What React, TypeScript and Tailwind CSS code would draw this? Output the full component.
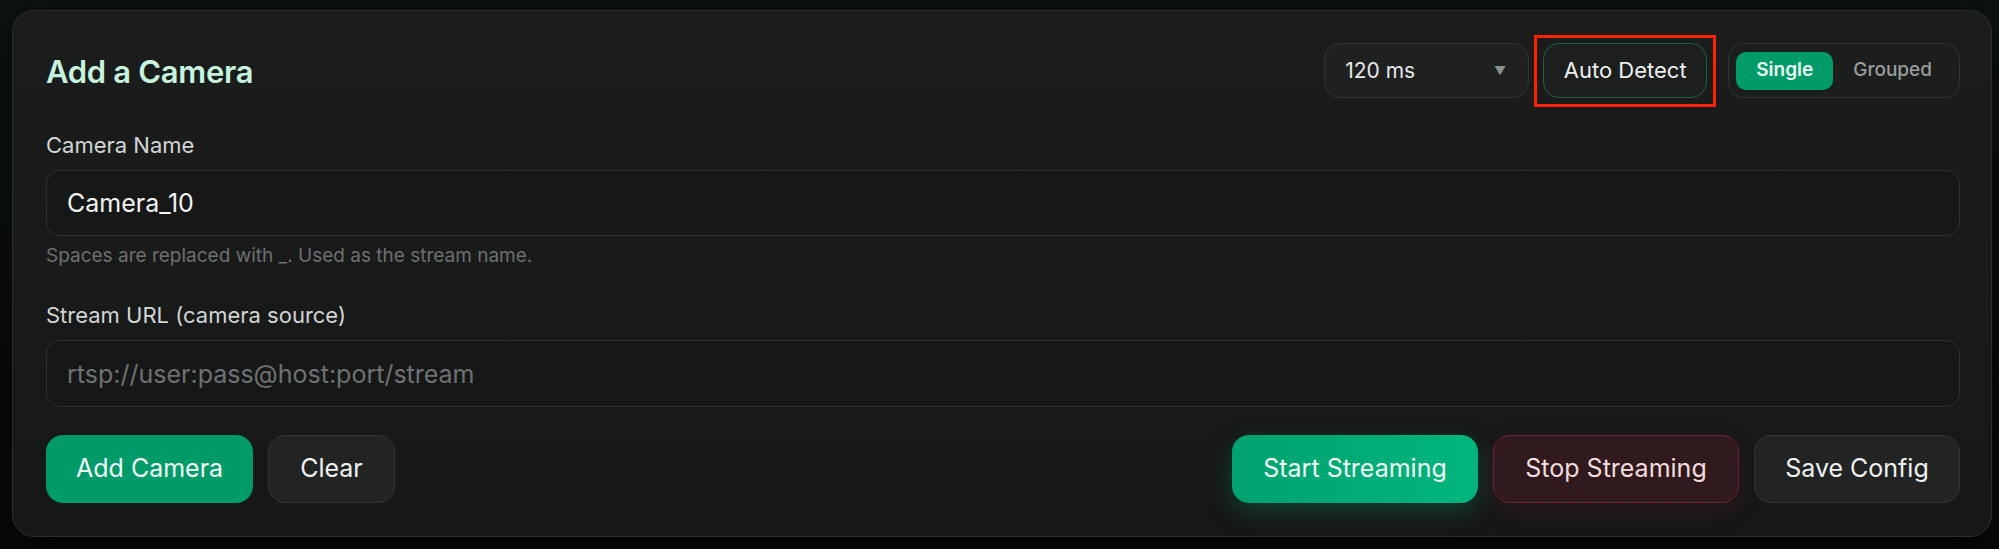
import { useState } from "react";

const font = { fontFamily: "Inter, 'Noto Sans', sans-serif" };

export default function App() {
  const [mode, setMode] = useState<"single" | "grouped">("single");
  const [name, setName] = useState("Camera_10");
  const [url, setUrl] = useState("");

  return (
    <div
      style={font}
      className="min-h-[549px] w-full bg-gradient-to-b from-[#0c1412] to-[#070808] pt-[10px] pl-[12px] pr-[7px] pb-[15px]"
    >
      <div className="rounded-[22px] border border-[#2b2e2e] bg-gradient-to-b from-[#1b1d1d] to-[#161717] pl-[33px] pr-[31px] pt-[32px] pb-[33px] shadow-[0_10px_40px_rgba(0,0,0,0.6)]">
        {/* header */}
        <div className="flex h-[55px] items-center">
          <h2 className="pt-[3px] text-[31px] font-semibold tracking-[-0.01em] text-[#c6f2de]">Add a Camera</h2>
          <div className="ml-auto flex h-full items-center">
            <button className="flex h-[55px] w-[205px] items-center justify-between rounded-[16px] border border-[#313434] bg-[#1f2121] pl-[20px] pr-[22px] text-[21px] text-[#e6e8e8]">
              <span>120 ms</span>
              <span className="text-[12px] text-[#8a8d8d]">▼</span>
            </button>
            <div className="relative ml-[14px]">
              <button className="h-[55px] w-[164px] rounded-[16px] border border-[#1e6149] bg-[#1c1f1e] text-[22px] text-[#eef0f0]">
                Auto Detect
              </button>
              <div className="pointer-events-none absolute -top-[8px] -bottom-[9px] -left-[9px] -right-[9px] border-[3px] border-[#ff2200]" />
            </div>
            <div className="ml-[21px] flex h-[55px] items-center rounded-[16px] border border-[#323535] bg-[#1c1e1e] px-[7px]">
              <button
                onClick={() => setMode("single")}
                className={
                  mode === "single"
                    ? "h-[38px] rounded-[10px] bg-[#019a69] px-[20px] text-[19px] font-semibold text-[#eafaf2]"
                    : "h-[38px] rounded-[10px] px-[20px] text-[19px] font-medium text-[#9a9d9d]"
                }
              >
                Single
              </button>
              <button
                onClick={() => setMode("grouped")}
                className={
                  mode === "grouped"
                    ? "h-[38px] rounded-[10px] bg-[#019a69] px-[20px] text-[19px] font-semibold text-[#eafaf2]"
                    : "h-[38px] rounded-[10px] px-[20px] text-[19px] font-medium text-[#9a9d9d]"
                }
              >
                Grouped
              </button>
            </div>
          </div>
        </div>

        {/* camera name */}
        <label className="mt-[33px] block text-[22px] leading-[28px] text-[#d2d5d5]">Camera Name</label>
        <input
          value={name}
          onChange={(e) => setName(e.target.value)}
          className="mt-[11px] block h-[66px] w-full rounded-[14px] border border-[#2e3131] bg-[#161717] px-[20px] text-[25px] text-[#f2f3f3] outline-none"
        />
        <p className="mt-[8px] text-[19px] leading-[24px] text-[#6c7070]">
          Spaces are replaced with _. Used as the stream name.
        </p>

        {/* stream url */}
        <label className="mt-[33px] block text-[22px] leading-[28px] text-[#d2d5d5]">Stream URL (camera source)</label>
        <input
          value={url}
          onChange={(e) => setUrl(e.target.value)}
          placeholder="rtsp://user:pass@host:port/stream"
          className="mt-[11px] block h-[67px] w-full rounded-[14px] border border-[#2e3131] bg-[#161717] px-[20px] text-[25px] text-[#f2f3f3] outline-none placeholder:text-[#6e7272]"
        />

        {/* actions */}
        <div className="mt-[28px] flex items-center">
          <button className="h-[68px] rounded-[17px] bg-[#019a69] px-[30px] text-[25px] text-[#f3fbf7]">Add Camera</button>
          <button className="ml-[15px] h-[68px] rounded-[17px] border border-[#343636] bg-[#222323] px-[31px] text-[25px] text-[#f0f1f1]">
            Clear
          </button>
          <div className="ml-auto flex items-center gap-[15px]">
            <button className="h-[68px] w-[246px] rounded-[17px] bg-gradient-to-r from-[#00a26f] to-[#01b57d] text-[25px] text-[#f3fbf7] shadow-[0_8px_26px_rgba(0,170,115,0.28)]">
              Start Streaming
            </button>
            <button className="h-[68px] w-[246px] rounded-[17px] border border-[#6c2232] bg-[#301a1e] text-[25px] text-[#f2dcdd] shadow-[0_8px_26px_rgba(190,40,70,0.12)]">
              Stop Streaming
            </button>
            <button className="h-[68px] w-[206px] rounded-[17px] border border-[#343636] bg-[#222323] text-[25px] text-[#f0f1f1]">
              Save Config
            </button>
          </div>
        </div>
      </div>
    </div>
  );
}
